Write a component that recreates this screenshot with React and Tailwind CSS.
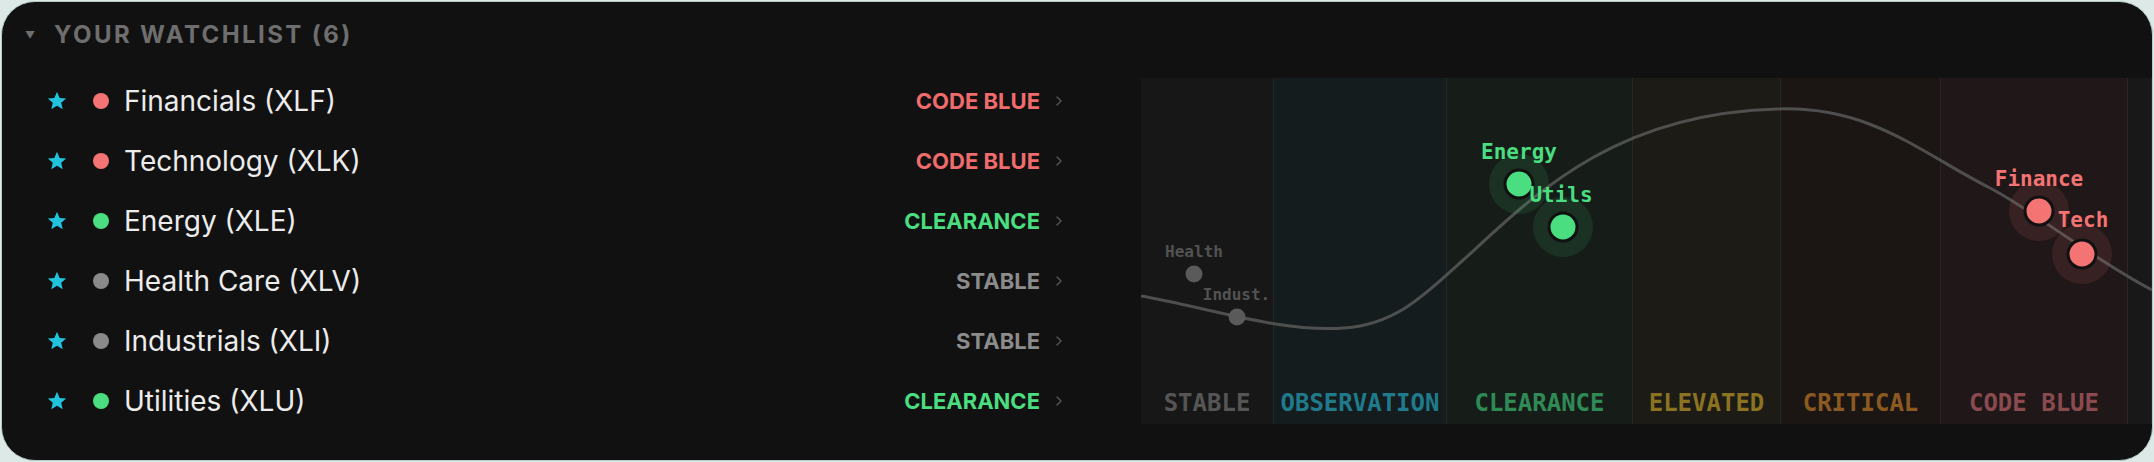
import React from 'react'

const rows = [
  { name: 'Financials (XLF)', status: 'CODE BLUE', tone: 'red' },
  { name: 'Technology (XLK)', status: 'CODE BLUE', tone: 'red' },
  { name: 'Energy (XLE)', status: 'CLEARANCE', tone: 'green' },
  { name: 'Health Care (XLV)', status: 'STABLE', tone: 'gray' },
  { name: 'Industrials (XLI)', status: 'STABLE', tone: 'gray' },
  { name: 'Utilities (XLU)', status: 'CLEARANCE', tone: 'green' },
]

const dotClass = {
  red: 'bg-[#f47373]',
  green: 'bg-[#4ade80]',
  gray: 'bg-[#8a8a8a]',
}

const statusClass = {
  red: 'text-[#f06c6c]',
  green: 'text-[#4ade80]',
  gray: 'text-[#8c8c8c]',
}

const zones = [
  { label: 'STABLE', w: 'w-[133px]', bg: 'bg-[#171717]', text: 'text-[#555555]' },
  { label: 'OBSERVATION', w: 'w-[173px]', bg: 'bg-[#151c1d]', text: 'text-[#1f7a8c]' },
  { label: 'CLEARANCE', w: 'w-[186px]', bg: 'bg-[#161d19]', text: 'text-[#2f8a55]' },
  { label: 'ELEVATED', w: 'w-[148px]', bg: 'bg-[#1c1b15]', text: 'text-[#8c7322]' },
  { label: 'CRITICAL', w: 'w-[160px]', bg: 'bg-[#1b1614]', text: 'text-[#8c5a20]' },
  { label: 'CODE BLUE', w: 'w-[187px]', bg: 'bg-[#201718]', text: 'text-[#8a4a4f]' },
  { label: '', w: 'w-[24px]', bg: 'bg-[#181818]', text: '' },
]

// sector markers, chart coordinates
const markers = [
  { label: 'Health', x: 53, y: 196, lx: 53, ly: 178.8, small: true },
  { label: 'Indust.', x: 96, y: 239, lx: 95.5, ly: 221.8, small: true },
  { label: 'Energy', x: 378, y: 106, lx: 378, ly: 80.6, color: '#4ade80', halo: 'rgba(74,222,128,0.11)' },
  { label: 'Utils', x: 422, y: 149, lx: 420, ly: 123.6, color: '#4ade80', halo: 'rgba(74,222,128,0.11)' },
  { label: 'Finance', x: 898, y: 133, lx: 898, ly: 107.6, color: '#f47373', halo: 'rgba(244,115,115,0.11)' },
  { label: 'Tech', x: 941, y: 176, lx: 942, ly: 148.6, color: '#f47373', halo: 'rgba(244,115,115,0.11)' },
]

function Star() {
  return (
    <svg width="22" height="22" viewBox="0 0 24 24" className="shrink-0">
      <polygon
        points="12,2 14.9,8.6 22,9.3 16.6,14 18.2,21 12,17.3 5.8,21 7.4,14 2,9.3 9.1,8.6"
        fill="#22c3dc"
      />
    </svg>
  )
}

function Chevron() {
  return (
    <svg width="8" height="12" viewBox="0 0 8 12" className="ml-[15px] shrink-0">
      <path d="M2 2l4 4-4 4" fill="none" stroke="#4f4f4f" strokeWidth="1.6" strokeLinecap="round" strokeLinejoin="round" />
    </svg>
  )
}

function PhaseChart() {
  return (
    <div className="relative flex h-[346px] w-[1011px] shrink-0 overflow-hidden">
      {zones.map((z, i) => (
        <div
          key={i}
          className={`${z.w} ${z.bg} flex h-full shrink-0 items-end justify-center border-r border-white/[0.06] pb-[9px] last:border-r-0`}
        >
          <span className={`${z.text} whitespace-nowrap font-['DejaVu_Sans_Mono',monospace] text-[24px] font-bold leading-none`}>
            {z.label}
          </span>
        </div>
      ))}
      <svg className="absolute inset-0" width="1011" height="346" viewBox="0 0 1011 346">
        <path
          d="M0,218 C60,228 140,255 203,250 C260,246 290,210 330,175 C400,110 480,35 637,31 C730,28 780,75 849,110 C890,131 950,180 1011,212"
          fill="none"
          stroke="#585858"
          strokeOpacity="0.85"
          strokeWidth="3"
        />
        {markers.map((m) =>
          m.small ? (
            <circle key={m.label} cx={m.x} cy={m.y} r="8.5" fill="#5a5a5a" />
          ) : (
            <g key={m.label}>
              <circle cx={m.x} cy={m.y} r="30" fill={m.halo} />
              <circle cx={m.x} cy={m.y} r="14" fill={m.color} stroke="#111111" strokeWidth="3" />
            </g>
          )
        )}
        {markers.map((m) => (
          <text
            key={m.label}
            x={m.lx}
            y={m.ly}
            textAnchor="middle"
            fontFamily="'DejaVu Sans Mono', monospace"
            fontWeight="bold"
            fontSize={m.small ? 16 : 21}
            fill={m.small ? '#525252' : m.color}
          >
            {m.label}
          </text>
        ))}
      </svg>
    </div>
  )
}

export default function App() {
  return (
    <div className="h-[462px] w-[2154px] bg-[#dce9e6] p-[1px]">
      <div className="flex h-full flex-col overflow-hidden rounded-[34px] border border-[#b3cbc7] bg-[#111111] pl-[24px] pt-[13px] font-['Inter','Liberation_Sans',sans-serif]">
        <div className="flex h-[40px] items-center">
          <span className="-ml-[1px] text-[10px] leading-none text-[#6e6e6e]">▼</span>
          <span className="ml-[19px] text-[24px] font-bold tracking-[0.1em] text-[#6e6e6e]">YOUR WATCHLIST (6)</span>
        </div>

        <div className="mt-[16px] flex">
          <div className="flex w-[1045px] shrink-0 flex-col pl-[20px]">
            {rows.map((row) => (
              <div key={row.name} className="flex h-[60px] items-center pr-[8px]">
                <Star />
                <span className={`ml-[25px] h-[16px] w-[16px] shrink-0 rounded-full ${dotClass[row.tone]}`} />
                <span className="ml-[15px] flex-1 text-[28px] text-[#ececec]">{row.name}</span>
                <span className={`text-[22px] font-bold ${statusClass[row.tone]}`}>{row.status}</span>
                <Chevron />
              </div>
            ))}
          </div>
          <div className="flex-1" />
          <div className="mt-[7px]">
            <PhaseChart />
          </div>
        </div>
      </div>
    </div>
  )
}
